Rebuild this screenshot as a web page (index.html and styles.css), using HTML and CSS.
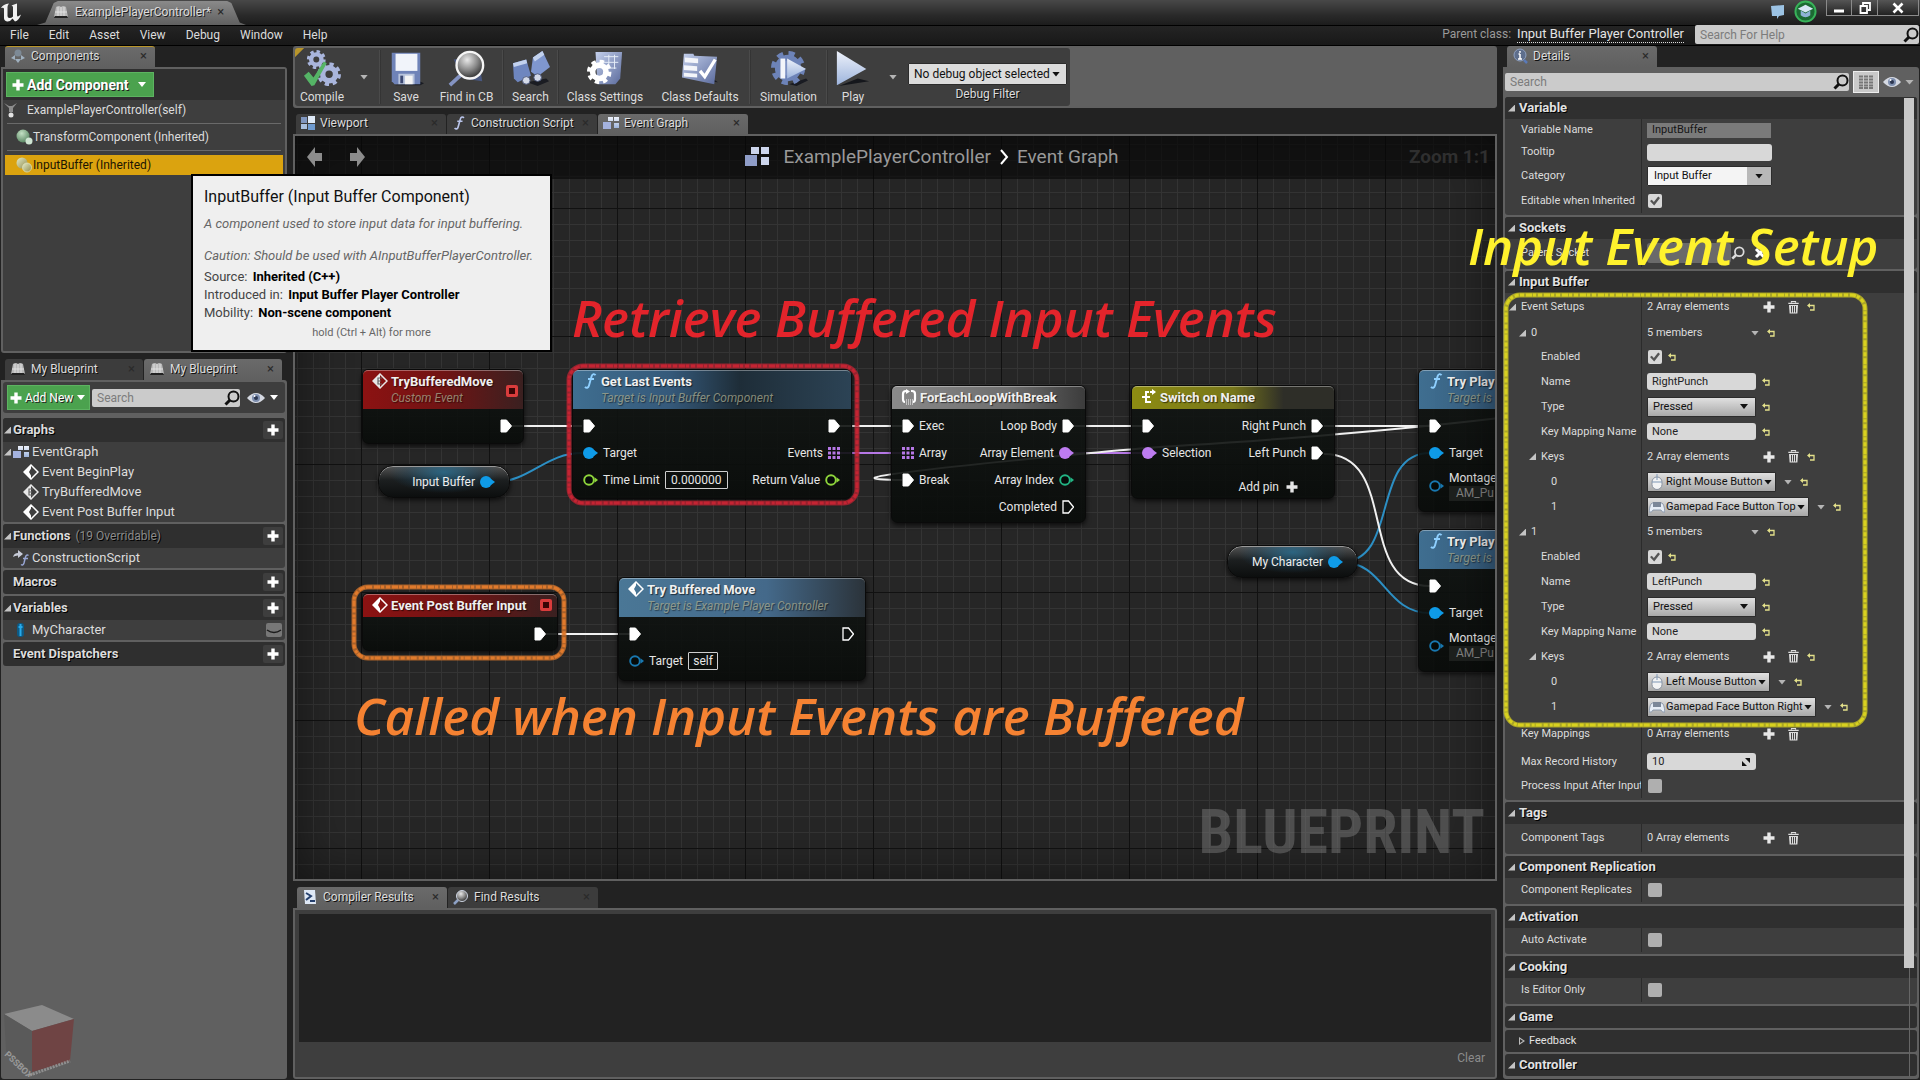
FILE: index.html
```html
<!DOCTYPE html>
<html lang="en">
<head>
<meta charset="utf-8">
<title>ExamplePlayerController</title>
<link rel="stylesheet" href="styles.css">
</head>
<body>
<svg class="defs" aria-hidden="true">
  <defs>
    <linearGradient id="steel" x1="0" y1="0" x2="1" y2="1"><stop offset="0" stop-color="#c4d0ec"/><stop offset="1" stop-color="#5a6a9c"/></linearGradient>
    <linearGradient id="ice" x1="0" y1="0" x2="0" y2="1"><stop offset="0" stop-color="#eef2fb"/><stop offset="1" stop-color="#9db4dc"/></linearGradient>
    <radialGradient id="ball" cx=".4" cy=".3" r=".7"><stop offset="0" stop-color="#e8e8e8"/><stop offset=".55" stop-color="#8a8a8a"/><stop offset="1" stop-color="#333"/></radialGradient>
    <radialGradient id="green" cx=".4" cy=".3" r=".7"><stop offset="0" stop-color="#c3e0c4"/><stop offset="1" stop-color="#5d8a66"/></radialGradient>
    <linearGradient id="tan" x1="0" y1="0" x2="1" y2="1"><stop offset="0" stop-color="#e4ecca"/><stop offset="1" stop-color="#8f8a4c"/></linearGradient>
  </defs>
  <symbol id="i-plus" viewBox="0 0 12 12"><path d="M4.300 0.500h3.400v3.800h3.800v3.400H7.700v3.800H4.300V7.700H.5V4.300h3.800z" fill="currentColor"/></symbol>
  <symbol id="i-search" viewBox="0 0 16 16"><circle cx="9.500" cy="6.500" r="5" fill="none" stroke="currentColor" stroke-width="2"/><path d="M6 10L1.500 14.500" stroke="currentColor" stroke-width="3"/></symbol>
  <symbol id="i-eye" viewBox="0 0 18 12"><path d="M0 6Q9-4 18 6Q9 16 0 6z" fill="#d5d9e2"/><circle cx="9" cy="6" r="4" fill="#7d8eae"/><circle cx="9" cy="6" r="2" fill="#2b3650"/><circle cx="7.500" cy="4" r="1" fill="#fff"/></symbol>
  <symbol id="i-trash" viewBox="0 0 11 13"><path d="M3.500 1.500V.5h4v1M.3 2.300h10.400" fill="none" stroke="#dcdcdc" stroke-width="1.200"/><path d="M1 4h9l-.6 8.500H1.600z" fill="#dcdcdc"/><path d="M3.500 5v6.500M5.500 5v6.500M7.500 5v6.500" stroke="#444"/></symbol>
  <symbol id="i-reset" viewBox="0 0 8 8"><path d="M1.500 2.500H7v4.500H3" fill="none" stroke="#e3e08a" stroke-width="1.300"/><path d="M0 2.500L3 0v5z" fill="#e3e08a"/></symbol>
  <symbol id="i-graph" viewBox="0 0 16 14"><path d="M5 1h5v4H5zM11 1h5v4h-5zM11 7h5v5h-5z" fill="url(#ice)"/><path d="M0 6h8v7H0z" fill="#a4b2de"/></symbol>
  <symbol id="i-view" viewBox="0 0 14 14"><path d="M0 1h6v6H0z" fill="#7f96bf"/><path d="M7 0h7v7H7z" fill="#dfeaf8"/><path d="M0 8h6v5H0z" fill="#a9c0df"/><path d="M7 8h7v6H7z" fill="#6f9bd0"/></symbol>
  <symbol id="i-f" viewBox="0 0 12 16"><path d="M11.500 2.300C10.500.5 8.300.8 7.600 3.300L5 12.500c-.7 2.500-2.500 3-4 1.300M4 6h6" fill="none" stroke="currentColor" stroke-width="1.900"/></symbol>
  <symbol id="i-event" viewBox="0 0 16 16"><path d="M8 1L15 8L8 15L1 8z" fill="none" stroke="#fff" stroke-width="1.500"/><path d="M8 1L1 8l7 7v-3.500L6 8l2-3.500z" fill="#fff"/></symbol>
  <symbol id="i-custom" viewBox="0 0 16 16"><path d="M8 1L15 8L8 15L1 8z" fill="none" stroke="#e8e8e8" stroke-width="1.500"/><path d="M8 1L1 8l7 7z" fill="#e8e8e8"/><path d="M10 5H6v6h4M6 8h3" fill="none" stroke="#666" stroke-width="1.200"/></symbol>
  <symbol id="i-book" viewBox="0 0 16 16"><path d="M1 13L3 3q3-2 5 0q2-2 5 0l2 10q-4-2-7 0q-3-2-7 0z" fill="#b9b9b9"/><path d="M8 3v10M5 3v9M11 3v9M2 8h12" stroke="#e9e9e9" stroke-width=".8"/><path d="M1 14h14l-1-2H2z" fill="#222"/></symbol>
  <symbol id="i-exec" viewBox="0 0 12 14"><path d="M1 1h5.500L11.500 7l-5 6H1z" fill="#fff" stroke="#fff"/></symbol>
  <symbol id="i-exec-o" viewBox="0 0 12 14"><path d="M1 1h5.500L11.500 7l-5 6H1z" fill="none" stroke="#fff" stroke-width="1.300"/></symbol>
  <symbol id="i-pin" viewBox="0 0 15 12"><circle cx="6" cy="6" r="6" fill="currentColor"/><path d="M11 3l4 3-4 3z" fill="currentColor"/></symbol>
  <symbol id="i-pin-o" viewBox="0 0 15 12"><circle cx="6" cy="6" r="4.800" fill="#060a08" stroke="currentColor" stroke-width="1.900"/><path d="M11.500 3.300l3.500 2.700-3.500 2.700z" fill="currentColor"/></symbol>
  <symbol id="i-array" viewBox="0 0 12 12"><path d="M0 0h3v3H0zM4.500 0h3v3h-3zM9 0h3v3H9zM0 4.500h3v3H0zM4.500 4.500h3v3h-3zM9 4.500h3v3H9zM0 9h3v3H0zM4.500 9h3v3h-3zM9 9h3v3H9z" fill="#b678e6"/></symbol>
  <symbol id="i-mouse" viewBox="0 0 12 16"><rect x="1" y="3" width="10" height="12.500" rx="5" fill="#f2f3f4" stroke="#8a93a0"/><path d="M6 0v6M1 8h10" stroke="#7f97b5"/></symbol>
  <symbol id="i-pad" viewBox="0 0 16 12"><path d="M3 2h10q2 1 3 9-3 1-4-2H4q-1 3-4 2Q1 3 3 2z" fill="#e6edf6" stroke="#7c8ba0" stroke-width=".8"/><path d="M4 1h8v5H4z" fill="#7b8798"/></symbol>
  <symbol id="i-gear" viewBox="0 0 24 24"><circle cx="12" cy="12" r="10" fill="none" stroke="currentColor" stroke-width="4" stroke-dasharray="4.200 3.654"/><circle cx="12" cy="12" r="6.500" fill="none" stroke="currentColor" stroke-width="5.500"/></symbol>
</svg>

<header class="titlebar">
  <svg class="ue" viewBox="0 0 24 22"><path d="M1 7Q3 3 9 2.500 7.500 4 7.500 6v9q0 2 2 2t3.500-1.500V6q0-1-1.500-1.500Q14 3.500 17 2.500V14q0 1.500 1 1.500l3-2q-2 6-6 7l-2.500-3Q10 21 7 20.500 4 19.500 4 17V8Q4 6 1 7z" fill="#f2f2f2"/></svg>
  <div class="doc-tab"><svg class="ic16"><use href="#i-book"/></svg><span>ExamplePlayerController*</span><i class="x">×</i></div>
  <div class="win">
    <svg class="ic16" viewBox="0 0 16 16"><path d="M1 2l13-1v10l-5 1-2 3v-3H2z" fill="#9cc3e4"/></svg>
    <svg class="hat" viewBox="0 0 24 24"><circle cx="12" cy="12" r="10.500" fill="#1c6a33" stroke="#38b35a" stroke-width="2"/><path d="M4 9l8-4 8 4-8 4z" fill="#d6e6f5"/><path d="M7 11v5q5 4 10 0v-5l-5 3z" fill="#8fb2d6"/></svg>
    <div class="win-btns">
      <button aria-label="Minimize"><svg viewBox="0 0 12 12"><path d="M1 9h10" stroke="#fff" stroke-width="3"/></svg></button>
      <button aria-label="Restore"><svg viewBox="0 0 12 12"><path d="M4 3V1h7v7H9M1.500 4h6.500v7H1.500z" fill="none" stroke="#fff" stroke-width="1.800"/></svg></button>
      <button class="wide" aria-label="Close"><svg viewBox="0 0 12 12"><path d="M1.500 1.500l9 9M10.500 1.500l-9 9" stroke="#fff" stroke-width="2.600"/></svg></button>
    </div>
  </div>
</header>
<nav class="menubar">
  <a href="#">File</a><a href="#">Edit</a><a href="#">Asset</a><a href="#">View</a><a href="#">Debug</a><a href="#">Window</a><a href="#">Help</a>
  <div class="parent"><span>Parent class:</span><a href="#" class="dotted">Input Buffer Player Controller</a></div>
  <div class="search help"><input type="text" placeholder="Search For Help" aria-label="Search For Help"><svg class="ic16"><use href="#i-search"/></svg></div>
</nav>

<main class="shell">
  <aside class="left">
    <div class="tabs"><div class="tab on hot w150"><svg class="ic16" viewBox="0 0 16 16"><circle cx="8" cy="5" r="3.500" fill="#7d8a96"/><path d="M1 10l4-3v5zM15 10l-4-3v5zM5 11h6l-3 4z" fill="#9fb0bf"/></svg><span>Components</span><i class="x">×</i></div></div>
    <section class="panel components">
      <div class="strip"><button class="green big"><svg class="ic12"><use href="#i-plus"/></svg>Add Component<i class="tri"></i></button></div>
      <div class="comp self"><svg class="ic16" viewBox="0 0 16 16"><path d="M1 1l5 3h3l5-3-4 5v4H6V6z" fill="#8c8c8c"/><circle cx="8" cy="13" r="2.500" fill="#e3e3e3"/></svg>ExamplePlayerController(self)</div>
      <hr>
      <div class="comp"><svg class="ic18" viewBox="0 0 18 16"><circle cx="8" cy="7" r="6.500" fill="url(#green)"/><circle cx="14" cy="12" r="3.500" fill="#cfe5d2"/></svg>TransformComponent (Inherited)</div>
      <hr>
      <div class="comp sel"><svg class="ic18" viewBox="0 0 18 16"><circle cx="7" cy="6" r="5.500" fill="url(#tan)"/><circle cx="12" cy="10.500" r="4.500" fill="url(#tan)" stroke="#e0e0b4" stroke-width=".8"/></svg>InputBuffer (Inherited)</div>
    </section>

    <div class="tabs low"><div class="tab w138"><svg class="ic16"><use href="#i-book"/></svg><span>My Blueprint</span><i class="x">×</i></div><div class="tab on w138"><svg class="ic16"><use href="#i-book"/></svg><span>My Blueprint</span><i class="x">×</i></div></div>
    <section class="panel blueprint">
      <div class="bp-tools"><button class="green"><svg class="ic12"><use href="#i-plus"/></svg>Add New<i class="tri"></i></button>
        <div class="search grow"><input type="text" placeholder="Search" aria-label="Search blueprint"><svg class="ic16"><use href="#i-search"/></svg></div>
        <svg class="eye"><use href="#i-eye"/></svg><i class="tri"></i></div>
      <div class="group first"><h2><i class="open"></i>Graphs<button aria-label="Add graph"><svg class="ic12"><use href="#i-plus"/></svg></button></h2>
        <div class="item"><i class="open"></i><svg class="ic16"><use href="#i-graph"/></svg>EventGraph</div>
        <div class="item sub"><svg class="ic16"><use href="#i-event"/></svg>Event BeginPlay</div>
        <div class="item sub"><svg class="ic16"><use href="#i-custom"/></svg>TryBufferedMove</div>
        <div class="item sub"><svg class="ic16"><use href="#i-event"/></svg>Event Post Buffer Input</div></div>
      <div class="group"><h2><i class="open"></i>Functions<small>(19 Overridable)</small><button aria-label="Add function"><svg class="ic12"><use href="#i-plus"/></svg></button></h2>
        <div class="item flat"><svg class="ic16" viewBox="0 0 16 16"><path d="M0 7q1-4 5-4V0l5 4-5 4V5.500Q2 5.500 0 7z" fill="#c7cbd8"/><path d="M15.500 5.500q-2-1.500-3 1.500l-1.500 6q-1 3-3 1.500M10 8.500h5" fill="none" stroke="#98a6d4" stroke-width="1.500"/></svg>ConstructionScript</div></div>
      <div class="group"><h2 class="noarrow">Macros<button aria-label="Add macro"><svg class="ic12"><use href="#i-plus"/></svg></button></h2></div>
      <div class="group"><h2><i class="open"></i>Variables<button aria-label="Add variable"><svg class="ic12"><use href="#i-plus"/></svg></button></h2>
        <div class="item flat"><svg class="ic16" viewBox="0 0 16 16"><rect x="4" y="1" width="7" height="14" rx="3" fill="#0e5a84"/><path d="M7.500 2v12M5.500 5h4" stroke="#27a9ea" stroke-width="2"/></svg>MyCharacter<button class="lash" aria-label="Toggle visibility"><svg viewBox="0 0 16 14"><path d="M1 7q7 5 14 0" fill="none" stroke="#1c1c1c" stroke-width="1.500"/></svg></button></div></div>
      <div class="group"><h2 class="noarrow">Event Dispatchers<button aria-label="Add dispatcher"><svg class="ic12"><use href="#i-plus"/></svg></button></h2></div>
      <svg class="cube" viewBox="0 0 76 72"><path d="M1 9L39 0l32 14-42 12z" fill="#8b8b8b"/><path d="M1 9l28 17v41L3 46z" fill="#5a5a5a"/><path d="M29 26l42-12-4 42-38 11z" fill="#6f4444"/><path d="M27 70l40-14" stroke="#8f8f8f" stroke-width="3" stroke-dasharray="2 1"/><text x="1" y="50" transform="rotate(44 1 50)" class="cube-t">PSSBOX</text></svg>
    </section>
  </aside>

  <section class="center">
    <div class="toolbar">
      <div class="tools">
        <button class="tool c54"><svg viewBox="0 0 40 40"><g color="#a9b5dc"><use href="#i-gear" x="4" y="0" width="20" height="20"/><use href="#i-gear" x="15" y="13" width="25" height="25"/></g><path d="M1 27l5-4 5 6L22 12l3 2-13 23-3 1z" fill="#55b466"/></svg>Compile</button>
        <button class="drop" aria-label="Compile options"><i class="tri dim"></i></button><i class="sep"></i>
        <button class="tool c50"><svg viewBox="0 0 40 40"><path d="M34 33l5 2-4 2H8z" fill="#191b22"/><path d="M5 3h30v33H8l-3-3z" fill="#6f83b8"/><path d="M9 4h23v18H9z" fill="#f1f4fa"/><path d="M12 25h17v11H12z" fill="#b8c4dc"/><path d="M19 27h8v9h-8z" fill="#f4f4f4"/><path d="M14 27h3v8h-3z" fill="#3b4872"/></svg>Save</button>
        <button class="tool c70"><svg viewBox="0 0 40 40"><path d="M6 10l26-3 4 26-20-3z" fill="#495880"/><path d="M2 37l12-11" stroke="#8493c2" stroke-width="4"/><circle cx="23" cy="16" r="14" fill="url(#ball)" stroke="#f5f5f5" stroke-width="2.500"/></svg>Find in CB</button><i class="sep"></i>
        <button class="tool c53"><svg viewBox="0 0 40 40"><path d="M16 34l20-4 3 3-12 5z" fill="#1a1c22"/><path d="M1 14l14-4 5 17-14 7-4-4z" fill="#6e86bf"/><path d="M22 8l10-7 8 17-13 10-7-5z" fill="#7f97cf"/><path d="M1 14l14-4 1 4-14 4zM22 8l10-7 2 4-10 7z" fill="#c3d2ee"/><circle cx="15" cy="32" r="4" fill="#d4dae8" stroke="#4c587c"/><circle cx="27" cy="29" r="4" fill="#d4dae8" stroke="#4c587c"/></svg>Search</button><i class="sep"></i>
        <button class="tool c92"><svg viewBox="0 0 40 40"><path d="M10 2h28l-2 28-5 6H12z" fill="url(#steel)"/><path d="M19 7h15M19 13h15M19 19h13M24 5v15M30 5v15" stroke="#e6edf8"/><g color="#fff"><use href="#i-gear" x="1" y="10" width="26" height="26"/></g></svg>Class Settings</button>
        <button class="tool c98"><svg viewBox="0 0 40 40"><path d="M33 30l6 4-20-2z" fill="#191b22"/><path d="M3 4h10l1 2 24 1-3 29L1 29z" fill="url(#steel)"/><path d="M4 8l14 1v5L4 13zM3 16l14 1v5L3 21zM3 24l14 1v4L3 28z" fill="#f3f5fa"/><path d="M20 22l5 6 11-18" fill="none" stroke="#fff" stroke-width="3.500"/></svg>Class Defaults</button><i class="sep"></i>
        <button class="tool c74"><svg viewBox="0 0 40 40"><path d="M20 36l18-6 2 2-12 6z" fill="#191b22"/><g color="#6d83b8"><use href="#i-gear" x="1" y="1" width="36" height="36"/></g><circle cx="19" cy="19" r="8" fill="#7f93c4"/><path d="M11 9h5v21h-5z" fill="#f3f5fa"/><path d="M18 9l20 11-20 10z" fill="url(#ice)"/></svg>Simulation</button><i class="sep"></i>
        <button class="tool c50"><svg viewBox="0 0 40 40"><path d="M5 38l32-5-12-3z" fill="#15171c"/><path d="M3 1l31 19L3 37z" fill="url(#ice)"/></svg>Play</button>
        <button class="drop" aria-label="Play options"><i class="tri dim"></i></button>
        <div class="debug"><div class="dd light"><select id="dbg" aria-label="Debug Filter"><option>No debug object selected</option></select><i class="tri dark"></i></div><label for="dbg">Debug Filter</label></div>
      </div>
    </div>
    <div class="tabs mid"><div class="tab w150"><svg class="ic14"><use href="#i-view"/></svg><span>Viewport</span><i class="x">×</i></div><div class="tab w150"><svg class="ic14 blue"><use href="#i-f"/></svg><span>Construction Script</span><i class="x">×</i></div><div class="tab on w150"><svg class="ic16"><use href="#i-graph"/></svg><span>Event Graph</span><i class="x">×</i></div></div>

    <div class="graph">
      <svg class="wires"><g transform="translate(-295,-136)" fill="none">
        <path class="w" d="M512 426H582M840 426H902M1074 426H1142M1324 426H1430M546 634H630"/>
        <path class="p" d="M840 453H902M1073 453H1142"/>
        <path class="w" d="M902 480C885 480 868 479 877 477C890 472 1120 449 1190 445S1400 430 1500 418"/>
        <path class="b" d="M494 482C530 482 545 453 582 453M1341 562C1400 562 1370 453 1430 453M1341 562C1385 562 1385 613 1430 613"/>
        <path class="w" d="M1324 454C1400 454 1355 586 1430 586"/>
      </g></svg>

      <article class="node n1"><header class="red"><svg class="ic16"><use href="#i-custom"/></svg><div><b>TryBufferedMove</b><em>Custom Event</em></div><i class="dlg"></i></header>
        <div class="body"><div class="pr"><span></span><svg class="ex"><use href="#i-exec"/></svg></div></div></article>
      <article class="var v1"><span>Input Buffer</span><svg class="pin cy"><use href="#i-pin"/></svg></article>
      <article class="node n2"><header class="blu"><svg class="ic16 lblue"><use href="#i-f"/></svg><div><b>Get Last Events</b><em>Target is Input Buffer Component</em></div></header>
        <div class="body"><div class="pr"><svg class="ex"><use href="#i-exec"/></svg><span></span><svg class="ex"><use href="#i-exec"/></svg></div>
          <div class="pr"><svg class="pin cy"><use href="#i-pin"/></svg>Target<span></span>Events<svg class="arr"><use href="#i-array"/></svg></div>
          <div class="pr"><svg class="pin gr"><use href="#i-pin-o"/></svg><label for="tl">Time Limit</label><input id="tl" class="nin w63" value="0.000000"><span></span>Return Value<svg class="pin gr"><use href="#i-pin-o"/></svg></div></div></article>
      <article class="node n3"><header class="red one"><svg class="ic16"><use href="#i-event"/></svg><div><b>Event Post Buffer Input</b></div><i class="dlg"></i></header>
        <div class="body"><div class="pr"><span></span><svg class="ex"><use href="#i-exec"/></svg></div></div></article>
      <article class="node n4"><header class="blu"><svg class="ic16"><use href="#i-event"/></svg><div><b>Try Buffered Move</b><em>Target is Example Player Controller</em></div></header>
        <div class="body"><div class="pr"><svg class="ex"><use href="#i-exec"/></svg><span></span><svg class="ex"><use href="#i-exec-o"/></svg></div>
          <div class="pr"><svg class="pin cd"><use href="#i-pin-o"/></svg><label for="sf">Target</label><input id="sf" class="nin w30" value="self"></div></div></article>
      <article class="node n5"><header class="gry one"><svg class="ic16" viewBox="0 0 16 16"><path d="M6 2H5Q2 2 2 5v5q0 3 2 3M10 2h1q3 0 3 3v5q0 3-2 3" fill="none" stroke="#fff" stroke-width="2.200"/><path d="M5 0l4 2.500L5 5z" fill="#fff"/><path d="M5 11h7M5 13h7M5 15h7" stroke="#fff" stroke-dasharray="1 1"/></svg><div><b>ForEachLoopWithBreak</b></div></header>
        <div class="body"><div class="pr"><svg class="ex"><use href="#i-exec"/></svg>Exec<span></span>Loop Body<svg class="ex"><use href="#i-exec"/></svg></div>
          <div class="pr"><svg class="arr"><use href="#i-array"/></svg>Array<span></span>Array Element<svg class="pin pu"><use href="#i-pin"/></svg></div>
          <div class="pr"><svg class="ex"><use href="#i-exec"/></svg>Break<span></span>Array Index<svg class="pin te"><use href="#i-pin-o"/></svg></div>
          <div class="pr"><span></span>Completed<svg class="ex"><use href="#i-exec-o"/></svg></div></div></article>
      <article class="node n6"><header class="yel one"><svg class="ic16" viewBox="0 0 16 16"><path d="M8 3H5v10h5M1 8h8M9 3h5" fill="none" stroke="#fff" stroke-width="2" /><path d="M11 0l4 3-4 3z" fill="#fff"/></svg><div><b>Switch on Name</b></div></header>
        <div class="body"><div class="pr"><svg class="ex"><use href="#i-exec"/></svg><span></span>Right Punch<svg class="ex"><use href="#i-exec"/></svg></div>
          <div class="pr"><svg class="pin pu"><use href="#i-pin"/></svg>Selection<span></span>Left Punch<svg class="ex"><use href="#i-exec"/></svg></div>
          <div class="pr add"><span></span><button>Add pin<svg class="ic12"><use href="#i-plus"/></svg></button></div></div></article>
      <article class="node n7"><header class="blu"><svg class="ic16 lblue"><use href="#i-f"/></svg><div><b>Try Play</b><em>Target is</em></div></header>
        <div class="body"><div class="pr"><svg class="ex"><use href="#i-exec"/></svg></div><div class="pr"><svg class="pin cy"><use href="#i-pin"/></svg>Target</div>
          <div class="pr two"><svg class="pin cd"><use href="#i-pin-o"/></svg><div>Montage<small>AM_Pu</small></div></div></div></article>
      <article class="node n8"><header class="blu"><svg class="ic16 lblue"><use href="#i-f"/></svg><div><b>Try Play</b><em>Target is</em></div></header>
        <div class="body"><div class="pr"><svg class="ex"><use href="#i-exec"/></svg></div><div class="pr"><svg class="pin cy"><use href="#i-pin"/></svg>Target</div>
          <div class="pr two"><svg class="pin cd"><use href="#i-pin-o"/></svg><div>Montage<small>AM_Pu</small></div></div></div></article>
      <article class="var v2"><span>My Character</span><svg class="pin cy"><use href="#i-pin"/></svg></article>

      <div class="shade"></div>
      <div class="crumbs">
        <div class="nav"><button aria-label="Back"><svg viewBox="0 0 18 22"><path d="M16 7v8H9v6L1 11 9 1v6z" fill="#8c8c8c"/></svg></button><button aria-label="Forward"><svg viewBox="0 0 18 22"><path d="M2 7v8h7v6l8-10L9 1v6z" fill="#8c8c8c"/></svg></button></div>
        <div class="path"><svg viewBox="0 0 24 20"><path d="M6 0h8v7H6zM16 0h8v7h-8zM16 10h8v8h-8z" fill="#ccd5ec"/><path d="M0 8h12v11H0z" fill="#8f9dc8"/></svg><a href="#">ExamplePlayerController</a><svg class="chev" viewBox="0 0 10 16"><path d="M2 1l6 7-6 7" fill="none" stroke="#fff" stroke-width="2"/></svg><span>Event Graph</span></div>
        <strong>Zoom 1:1</strong>
      </div>
      <div class="mark">BLUEPRINT</div>
    </div>

    <div class="tabs low"><div class="tab on w150"><svg class="ic16" viewBox="0 0 16 16"><path d="M2 1h11l1 14H3z" fill="#dfe8f5"/><path d="M4 4l5 3-5 4M8 12h5" fill="none" stroke="#25406e" stroke-width="2"/></svg><span>Compiler Results</span><i class="x">×</i></div><div class="tab w150"><svg class="ic16" viewBox="0 0 16 16"><path d="M1 15l4-4" stroke="#8ea2c6" stroke-width="2.500"/><circle cx="9" cy="7" r="5.500" fill="url(#ball)" stroke="#cfd6e4"/></svg><span>Find Results</span><i class="x">×</i></div></div>
    <section class="results"><div class="log"></div><button>Clear</button></section>
  </section>

  <aside class="right">
    <div class="tabs"><div class="tab on w150"><svg class="ic16" viewBox="0 0 16 16"><circle cx="8" cy="7" r="6" fill="#5e6e8c" stroke="#8ea0c0"/><path d="M12 12l3 3" stroke="#5a7ab8" stroke-width="2.500"/><path d="M8 6v5M8 3v1.800M6.500 6H8M6 11h4" stroke="#fff" stroke-width="1.500"/></svg><span>Details</span><i class="x">×</i></div></div>
    <section class="details">
      <div class="d-tools"><div class="search grow"><input type="text" placeholder="Search" aria-label="Search details"><svg class="ic16"><use href="#i-search"/></svg></div>
        <button class="matrix" aria-label="Property matrix"><svg viewBox="0 0 16 14"><path d="M1 1.500h14M1 4.500h14M1 7.500h14M1 10.500h14M1 13h14" stroke="#777" stroke-width="2" stroke-dasharray="4 1"/></svg></button><svg class="eye"><use href="#i-eye"/></svg><i class="tri dim"></i></div>
      <div class="d-list">
        <div class="cat"><h2><i class="open"></i>Variable</h2>
          <div class="row r22"><label for="a1">Variable Name</label><div><input id="a1" class="fld ro" value="InputBuffer" readonly></div></div>
          <div class="row r22"><label for="a2">Tooltip</label><div><input id="a2" class="fld w125" value=""></div></div>
          <div class="row r26"><label for="a3">Category</label><div><div class="dd combo"><select id="a3"><option>Input Buffer</option></select><b><i class="tri dark"></i></b></div></div></div>
          <div class="row r24"><label for="a4">Editable when Inherited</label><div><input id="a4" type="checkbox" checked></div></div></div>
        <div class="cat"><h2><i class="open"></i>Sockets</h2>
          <div class="row r28"><label for="b1">Parent Socket</label><div><input id="b1" class="fld sock" readonly><svg class="ic14 mag"><use href="#i-search"/></svg><svg class="ic12 clr" viewBox="0 0 12 12"><path d="M2 2l8 8M10 2l-8 8" stroke="#fff" stroke-width="3"/></svg></div></div></div>
        <div class="cat"><h2><i class="open"></i>Input Buffer</h2>
          <div class="row r28"><span class="name l0"><i class="open"></i>Event Setups</span><div><span class="cnt">2 Array elements</span><svg class="ic12 pl"><use href="#i-plus"/></svg><svg class="bin"><use href="#i-trash"/></svg><svg class="rs"><use href="#i-reset"/></svg></div></div>
          <div class="row r24"><span class="name l1"><i class="open"></i>0</span><div><span class="mem">5 members</span><i class="tri dim"></i><svg class="rs"><use href="#i-reset"/></svg></div></div>
          <div class="row r24"><label class="l2" for="c1">Enabled</label><div><input id="c1" type="checkbox" checked><svg class="rs"><use href="#i-reset"/></svg></div></div>
          <div class="row"><label class="l2" for="c2">Name</label><div><input id="c2" class="fld w109" value="RightPunch"><svg class="rs"><use href="#i-reset"/></svg></div></div>
          <div class="row"><label class="l2" for="c3">Type</label><div><div class="dd w108"><select id="c3"><option>Pressed</option></select><i class="tri dark"></i></div><svg class="rs"><use href="#i-reset"/></svg></div></div>
          <div class="row"><label class="l2" for="c4">Key Mapping Name</label><div><input id="c4" class="fld w109" value="None"><svg class="rs"><use href="#i-reset"/></svg></div></div>
          <div class="row"><span class="name l2"><i class="open"></i>Keys</span><div><span class="cnt">2 Array elements</span><svg class="ic12 pl"><use href="#i-plus"/></svg><svg class="bin"><use href="#i-trash"/></svg><svg class="rs"><use href="#i-reset"/></svg></div></div>
          <div class="row r26"><label class="l3" for="c5">0</label><div><div class="dd key"><svg class="ic16"><use href="#i-mouse"/></svg><select id="c5"><option>Right Mouse Button</option></select><i class="tri dark"></i></div><i class="tri dim"></i><svg class="rs"><use href="#i-reset"/></svg></div></div>
          <div class="row r24"><label class="l3" for="c6">1</label><div><div class="dd key"><svg class="ic16"><use href="#i-pad"/></svg><select id="c6"><option>Gamepad Face Button Top</option></select><i class="tri dark"></i></div><i class="tri dim"></i><svg class="rs"><use href="#i-reset"/></svg></div></div>
          <div class="row r26"><span class="name l1"><i class="open"></i>1</span><div><span class="mem">5 members</span><i class="tri dim"></i><svg class="rs"><use href="#i-reset"/></svg></div></div>
          <div class="row r24"><label class="l2" for="e1">Enabled</label><div><input id="e1" type="checkbox" checked><svg class="rs"><use href="#i-reset"/></svg></div></div>
          <div class="row"><label class="l2" for="e2">Name</label><div><input id="e2" class="fld w109" value="LeftPunch"><svg class="rs"><use href="#i-reset"/></svg></div></div>
          <div class="row"><label class="l2" for="e3">Type</label><div><div class="dd w108"><select id="e3"><option>Pressed</option></select><i class="tri dark"></i></div><svg class="rs"><use href="#i-reset"/></svg></div></div>
          <div class="row"><label class="l2" for="e4">Key Mapping Name</label><div><input id="e4" class="fld w109" value="None"><svg class="rs"><use href="#i-reset"/></svg></div></div>
          <div class="row"><span class="name l2"><i class="open"></i>Keys</span><div><span class="cnt">2 Array elements</span><svg class="ic12 pl"><use href="#i-plus"/></svg><svg class="bin"><use href="#i-trash"/></svg><svg class="rs"><use href="#i-reset"/></svg></div></div>
          <div class="row r26"><label class="l3" for="e5">0</label><div><div class="dd key"><svg class="ic16"><use href="#i-mouse"/></svg><select id="e5"><option>Left Mouse Button</option></select><i class="tri dark"></i></div><i class="tri dim"></i><svg class="rs"><use href="#i-reset"/></svg></div></div>
          <div class="row r24"><label class="l3" for="e6">1</label><div><div class="dd key"><svg class="ic16"><use href="#i-pad"/></svg><select id="e6"><option>Gamepad Face Button Right</option></select><i class="tri dark"></i></div><i class="tri dim"></i><svg class="rs"><use href="#i-reset"/></svg></div></div>
          <div class="row r30"><span class="name">Key Mappings</span><div><span class="cnt">0 Array elements</span><svg class="ic12 pl"><use href="#i-plus"/></svg><svg class="bin"><use href="#i-trash"/></svg></div></div>
          <div class="row"><label for="g1">Max Record History</label><div><div class="spin"><input id="g1" class="fld w109" value="10"><svg viewBox="0 0 10 10"><path d="M4 1h5v5zM1 4v5h5z" fill="#111"/></svg></div></div></div>
          <div class="row r24"><label for="g2">Process Input After Input</label><div><input id="g2" type="checkbox"></div></div></div>
        <div class="cat"><h2><i class="open"></i>Tags</h2>
          <div class="row r28"><span class="name">Component Tags</span><div><span class="cnt">0 Array elements</span><svg class="ic12 pl"><use href="#i-plus"/></svg><svg class="bin"><use href="#i-trash"/></svg></div></div></div>
        <div class="cat"><h2><i class="open"></i>Component Replication</h2><div class="row r24"><label for="h1">Component Replicates</label><div><input id="h1" type="checkbox"></div></div></div>
        <div class="cat"><h2><i class="open"></i>Activation</h2><div class="row r24"><label for="h2">Auto Activate</label><div><input id="h2" type="checkbox"></div></div></div>
        <div class="cat"><h2><i class="open"></i>Cooking</h2><div class="row r24"><label for="h3">Is Editor Only</label><div><input id="h3" type="checkbox"></div></div></div>
        <div class="cat bare"><h2><i class="open"></i>Game</h2></div>
        <div class="cat bare"><h3><i class="shut"></i>Feedback</h3></div>
        <div class="cat bare"><h2><i class="open"></i>Controller</h2></div>
        <div class="scroll"></div>
      </div>
    </section>
  </aside>
</main>

<div class="tip" role="tooltip">
  <h4>InputBuffer (Input Buffer Component)</h4>
  <p class="it">A component used to store input data for input buffering.</p>
  <p class="it">Caution: Should be used with AInputBufferPlayerController.</p>
  <p>Source: <b>Inherited (C++)</b></p><p>Introduced in: <b>Input Buffer Player Controller</b></p><p>Mobility: <b>Non-scene component</b></p>
  <p class="hold">hold (Ctrl + Alt) for more</p>
</div>
<svg class="ring ring-red"><rect class="base"/><rect class="grain"/></svg>
<svg class="ring ring-orange"><rect class="base"/><rect class="grain"/></svg>
<svg class="ring ring-yellow"><rect class="base"/><rect class="grain"/></svg>
<div class="note note-red">Retrieve Buffered Input Events</div>
<div class="note note-orange">Called when Input Events are Buffered</div>
<div class="note note-yellow">Input Event Setup</div>
</body>
</html>
```
FILE: styles.css
```css
* { box-sizing: border-box; }
body { margin: 0; height: 100vh; display: flex; flex-direction: column; overflow: hidden; position: relative; background: #222; color: #dcdcdc; font: 12px/16px Roboto, "Liberation Sans", sans-serif; }
button, input, select { font: inherit; color: inherit; border: 0; padding: 0; margin: 0; background: none; outline: 0; }
select, input[type="checkbox"] { appearance: none; }
a { color: inherit; text-decoration: none; }
svg { display: block; flex: none; }
h2, h3, h4, p { margin: 0; }
.defs { position: absolute; width: 0; height: 0; }
.ic12 { width: 12px; height: 12px; }
.ic14 { width: 14px; height: 14px; }
.ic16 { width: 16px; height: 16px; }
.ic18 { width: 18px; height: 16px; }
.blue { color: #b9c4ea; }
.lblue { color: #8fd0ff; }

/* title and menu */
.titlebar { height: 25px; flex: none; display: flex; align-items: flex-start; background: linear-gradient(#484848, #2a2a2a 60%, #1c1c1c); }
.ue { width: 24px; height: 22px; margin-top: 1px; }
.doc-tab { margin: 1px auto 0 13px; width: 209px; height: 24px; padding: 0 16px 2px; display: flex; align-items: center; gap: 6px; background: linear-gradient(#8a8a8a, #606060); clip-path: polygon(0 100%, 4% 90%, 8% 8%, 10% 0, 91% 0, 93% 8%, 97% 90%, 100% 100%); text-shadow: 1px 1px #222; }
.x { font-style: normal; font-size: 13px; color: #2a2a2a; text-shadow: none; }
.win { display: flex; gap: 6px; }
.win > .ic16 { margin: 4px 2px 0 0; }
.hat { width: 23px; height: 23px; }
.win-btns { display: flex; margin-left: 3px; margin-right: 1px; }
.win-btns button { width: 26px; height: 16px; display: grid; place-items: center; background: linear-gradient(#555, #222); border: 1px solid #8a8a8a; border-top: 0; border-left-width: 0; }
.win-btns button:first-child { border-left-width: 1px; }
.win-btns .wide { width: 41px; }
.win-btns svg { width: 12px; height: 12px; }
.menubar { height: 21px; flex: none; display: flex; align-items: center; gap: 20px; padding: 0 0 2px 10px; border-top: 1px solid #000; border-bottom: 1px solid #000; background: linear-gradient(#242424, #181818); }
.parent { margin-left: auto; display: flex; gap: 6px; color: #9a9a9a; }
.dotted { color: #e4e4e4; font-size: 13px; border-bottom: 1px dotted #ddd; }
.search { display: flex; align-items: center; height: 18px; background: #cbcbcb; border-radius: 2px; padding-left: 5px; color: #111; }
.search input { flex: 1; min-width: 0; width: 0; }
.search input::placeholder { color: #7c7c7c; opacity: 1; }
.menubar .help { width: 224px; height: 19px; margin: 0 1px 0 -9px; }
.grow { flex: 1; }

/* shell */
.shell { flex: 1; min-height: 0; display: grid; grid-template-columns: 286px minmax(0, 1fr) 416px; gap: 6px; padding: 0 1px 1px; }
.left, .center, .right { display: flex; flex-direction: column; min-height: 0; }
.tabs { display: flex; gap: 1px; height: 21px; flex: none; padding-left: 4px; }
.tabs.low { margin-top: 6px; }
.tabs.mid { height: 20px; margin-top: 6px; padding-left: 3px; }
.tab { display: flex; align-items: center; gap: 5px; padding: 0 8px 2px 5px; background: #3c3c3c; border-radius: 3px 3px 0 0; text-shadow: 1px 1px #111; white-space: nowrap; }
.tab.on { background: linear-gradient(#6a6a6a, #606060); }
.tab.hot { border-top: 1px solid #b8952a; }
.tab .x { margin-left: auto; }
.w150 { width: 150px; }
.w138 { width: 138px; }
.panel { border: 2px solid #606060; border-radius: 0 3px 3px 3px; background: #3e3e3e; }
.tri { width: 8px; height: 5px; flex: none; background: #fff; clip-path: polygon(0 0, 100% 0, 50% 100%); }
.tri.dim { background: #b5b5b5; }
.tri.dark { background: #111; }
.open { width: 7px; height: 7px; flex: none; background: #c4c4c4; clip-path: polygon(100% 0, 100% 100%, 0 100%); }
.shut { width: 6px; height: 8px; flex: none; background: #bbb; clip-path: polygon(0 0, 100% 50%, 0 100%, 0 0, 1px 2px, 1px 6px, 4px 4px, 1px 2px); }

/* components */
.components { height: 286px; flex: none; }
.strip { background: #2f2f2f; padding: 3px; height: 31px; }
.green { display: flex; align-items: center; gap: 3px; height: 25px; background: #4ba24e; color: #fff; text-shadow: 1px 1px #222; padding: 0 5px 0 3px; box-shadow: inset 0 0 0 1px #5db361; white-space: nowrap; }
.green.big { width: 148px; padding-left: 6px; padding-right: 8px; font-size: 14px; font-weight: bold; }
.green .tri { margin-left: auto; }
.components hr { border: 0; height: 1px; margin: 3px 4px; background: #6a6a6a; }
.comp { height: 20px; display: flex; align-items: center; padding-left: 12px; }
.comp.self { padding-left: 0; gap: 8px; margin-bottom: 3px; }
.comp.sel { background: #dba30f; color: #1c1503; margin: 4px 2px; padding-left: 10px; padding-bottom: 1px; }

/* my blueprint */
.blueprint { flex: 1; min-height: 0; background: #606060; display: flex; flex-direction: column; gap: 2px; overflow: hidden; font-size: 13px; }
.bp-tools { display: flex; align-items: center; gap: 2px; height: 31px; padding: 0 7px 0 4px; background: #3e3e3e; border-radius: 3px; font-size: 12px; margin-bottom: 3px; }
.bp-tools .green { width: 83px; gap: 3px; }
.bp-tools .eye { margin: 0 3px 0 5px; }
.eye { width: 18px; height: 12px; }
.group { background: #3e3e3e; border-radius: 3px; overflow: hidden; }
.group h2 { height: 24px; display: flex; align-items: center; gap: 2px; padding: 0 2px 0 1px; background: #2f2f2f; font-size: 13px; text-shadow: 1px 1px #000; }
.group h2.noarrow { padding-left: 10px; }
.group h2 small { font-size: 12px; font-weight: normal; color: #8a8a8a; margin-left: 3px; }
.group h2 button { margin-left: auto; width: 20px; height: 18px; display: grid; place-items: center; background: #3e3e3e; border-radius: 2px; color: #fff; }
.item { height: 20px; display: flex; align-items: center; gap: 3px; padding-left: 1px; }
.item .open + svg { margin-left: -1px; }
.item.sub { padding-left: 20px; }
.item.flat { padding-left: 10px; padding-right: 3px; }
.lash { margin-left: auto; width: 16px; height: 14px; background: #777; border-radius: 2px; }
.cube { width: 76px; height: 72px; margin-top: auto; overflow: visible; }
.cube-t { font: bold 9px Roboto, sans-serif; fill: #999; }

/* toolbar */
.toolbar { height: 62px; flex: none; padding: 2px; background: #606060; border-radius: 3px; display: flex; }
.tools { display: flex; align-items: stretch; background: linear-gradient(135deg, #b8952a 6px, #3e3e3e 7px); border-radius: 3px; text-shadow: 1px 1px #111; padding-right: 3px; }
.tool { display: flex; flex-direction: column; align-items: center; gap: 1px; white-space: nowrap; }
.tool svg { width: 38px; height: 38px; margin-top: 2px; }
.c50 { width: 50px; } .c53 { width: 53px; } .c54 { width: 54px; } .c70 { width: 71px; } .c74 { width: 75px; } .c92 { width: 92px; } .c98 { width: 98px; }
.drop { width: 30px; display: grid; place-items: center; }
.sep { width: 2px; margin: 2px 0; background: linear-gradient(90deg, #555, #2a2a2a); }
.debug { display: flex; flex-direction: column; align-items: center; gap: 1px; padding-top: 15px; }
.dd { display: inline-flex; align-items: center; height: 20px; padding: 0 3px 0 5px; background: linear-gradient(#e0e0e0, #a8a8a8); border: 1px solid #2c2c2c; border-radius: 1px; color: #111; text-shadow: none; }
.dd.light { width: 159px; height: 22px; background: #dcdcdc; justify-content: space-between; padding-right: 6px; }

/* graph */
.graph { flex: 1; min-height: 0; position: relative; overflow: hidden; border: 2px solid #606060; background:
  linear-gradient(90deg, #111 1px, transparent 1px) 66px 0 / 128px 128px,
  linear-gradient(#111 1px, transparent 1px) 0 72px / 128px 128px,
  linear-gradient(90deg, #343434 1px, transparent 1px) 2px 0 / 16px 16px,
  linear-gradient(#343434 1px, transparent 1px) 0 8px / 16px 16px, #262626; }
.shade { position: absolute; inset: 0; box-shadow: inset 0 0 50px rgba(0, 0, 0, .5); pointer-events: none; }
.wires { position: absolute; inset: 0; width: 100%; height: 100%; }
.wires .w { stroke: #f0f0f0; stroke-width: 2; }
.wires .p { stroke: #b678e6; stroke-width: 2; }
.wires .b { stroke: #2c8fc4; stroke-width: 2; }
.crumbs { position: absolute; inset: 0 0 auto; height: 43px; display: grid; grid-template-columns: 1fr auto 1fr; align-items: center; background: rgba(8, 8, 8, .65); font-size: 19px; line-height: 24px; color: #999; padding: 0 5px 2px 11px; }
.nav { display: flex; gap: 24px; }
.nav svg { width: 18px; height: 22px; }
.path { display: flex; align-items: center; gap: 8px; padding-left: 68px; }
.path > svg:first-child { width: 24px; height: 20px; margin-right: 6px; }
.path .chev { width: 10px; height: 16px; }
.crumbs strong { justify-self: end; color: #2f2f2f; }
.mark { position: absolute; right: 10px; bottom: 11px; font: bold 62px/72px "Roboto Condensed", "Liberation Sans Narrow", Roboto, sans-serif; color: rgba(120, 120, 120, .5); }
.node { position: absolute; border: 1px solid #0a0a0a; border-radius: 6px; background: linear-gradient(rgba(18, 22, 20, .9), rgba(8, 11, 9, .9)); box-shadow: 0 2px 5px rgba(0, 0, 0, .7); color: #e6e6e6; white-space: nowrap; }
.node header { display: flex; gap: 2px; height: 39px; padding: 2px 4px 0 9px; border-radius: 5px 5px 0 0; border-top: 1px solid rgba(255, 255, 255, .35); line-height: 17px; text-shadow: 1px 1px 1px rgba(0, 0, 0, .6); }
.node header.one { height: 23px; }
.node header div { display: flex; flex-direction: column; flex: 1; margin-left: 1px; }
.node header b { font-size: 13px; color: #f0f0f0; }
.node em { color: #a5a78c; opacity: .75; }
.red { background: linear-gradient(90deg, #8c1212, #701414 50%, #3a2020); }
.blu { background: linear-gradient(90deg, #3f6e90, #35597a 35%, #1e2d38 60%, #2c4355); }
.n4 .blu { background: linear-gradient(90deg, #4a7796, #44698a 60%, #2b333a); }
.gry { background: linear-gradient(90deg, #8a8a8a, #6e6e6e 60%, #3c3c3c); }
.yel { background: linear-gradient(90deg, #8d8c12, #77761a 50%, #2e2e28 75%); }
.dlg { width: 12px; height: 12px; flex: none; border: 3px solid #d93c3c; border-radius: 2px; background: #3a0505; align-self: center; margin-right: 1px; }
.one .dlg { align-self: flex-start; margin-top: 2px; }
.body { padding: 3px 11px 0 10px; }
.pr { display: flex; align-items: center; gap: 5px; height: 27px; }
.pr span { flex: 1; }
.ex { width: 12px; height: 14px; }
.pin { width: 15px; height: 12px; }
.arr { width: 12px; height: 12px; }
.cy { color: #0f9be8; } .cd { color: #1978b0; } .gr { color: #8fd63c; } .te { color: #22b584; } .pu { color: #bd7cf0; }
.nin { height: 18px; border: 1px solid #cfcfcf; border-radius: 1px; text-align: center; }
.w63 { width: 63px; } .w30 { width: 30px; }
.add { margin-top: 7px; padding-right: 25px; }
.add button { display: flex; align-items: center; gap: 7px; }
.two { height: 40px; align-items: center; }
.two div { display: flex; flex-direction: column; align-items: flex-start; line-height: 15px; }
.two small { font-size: 12px; color: #858585; background: #1d201e; padding-left: 7px; }
.var { position: absolute; height: 33px; border-radius: 15px; border: 1px solid #0a0a0a; background: radial-gradient(ellipse at 50% 20%, rgba(40, 110, 145, .8), rgba(30, 80, 110, .3) 40%, transparent 60%), linear-gradient(#555, #1c1f20 45%, #0c0e0e); box-shadow: inset 0 1px #999, 0 2px 5px rgba(0, 0, 0, .7); display: flex; align-items: center; justify-content: flex-end; gap: 5px; padding-right: 14px; color: #eee; }
.n1 { left: 67px; top: 233px; width: 162px; height: 75px; }
.v1 { left: 83px; top: 329px; width: 132px; }
.n2 { left: 277px; top: 233px; width: 280px; height: 130px; }
.n3 { left: 67px; top: 457px; width: 196px; height: 58px; }
.n4 { left: 323px; top: 441px; width: 248px; height: 104px; }
.n5 { left: 596px; top: 249px; width: 195px; height: 138px; }
.n6 { left: 836px; top: 249px; width: 204px; height: 114px; }
.n7 { left: 1123px; top: 233px; width: 300px; height: 143px; }
.n8 { left: 1123px; top: 393px; width: 300px; height: 143px; }
.v2 { left: 932px; top: 409px; width: 131px; }

/* compiler results */
.results { height: 171px; flex: none; display: flex; flex-direction: column; padding: 4px; border: 2px solid #606060; background: #3e3e3e; border-radius: 0 3px 3px 3px; }
.log { flex: 1; background: #222; }
.results button { align-self: flex-end; color: #8c8c8c; margin: 8px 6px 7px 0; }

/* details */
.details { flex: 1; min-height: 0; background: #606060; border-radius: 0 3px 3px 3px; padding: 3px 2px 2px; overflow: hidden; font-size: 11px; display: flex; flex-direction: column; }
.d-tools { display: flex; align-items: center; height: 24px; padding-right: 3px; font-size: 12px; gap: 4px; margin-bottom: 3px; }
.d-tools .tri { width: 9px; }
.matrix { width: 26px; height: 22px; background: #c9c9c9; display: grid; place-items: center; border: 1px solid #eee; }
.matrix svg { width: 16px; height: 14px; }
.d-list { position: relative; flex: 1; min-height: 0; overflow: hidden; display: flex; flex-direction: column; gap: 2px; }
.cat { background: #3e3e3e; border-radius: 3px; overflow: hidden; padding-bottom: 2px; flex: none; }
.cat.bare { padding: 0; background: #2f2f2f; }
.cat h2, .cat h3 { height: 22px; display: flex; align-items: center; gap: 4px; padding-left: 3px; background: #2f2f2f; font-size: 13px; color: #e2e2e2; text-shadow: 1px 1px #000; }
.cat h3 { padding-left: 14px; font-size: 11px; font-weight: normal; text-shadow: none; }
.row { height: 25px; display: flex; }
.r22 { height: 22px; } .r24 { height: 24px; } .r26 { height: 26px; } .r28 { height: 28px; } .r30 { height: 30px; }
.row > label, .row > .name { width: 137px; flex: none; display: flex; align-items: center; padding-left: 16px; border-right: 1px solid #2b2b2b; white-space: nowrap; overflow: hidden; }
.row > div { display: flex; align-items: center; padding-left: 5px; }
.row > .l0 { padding-left: 4px; gap: 5px; }
.row > .l1 { padding-left: 14px; gap: 5px; }
.row > .l2 { padding-left: 36px; }
.row > .name.l2 { padding-left: 24px; gap: 5px; }
.row > .l3 { padding-left: 46px; }
.fld { height: 17px; padding: 0 5px; background: #d8d8d8; border-radius: 3px; color: #222; }
.fld.ro { width: 124px; height: 15px; background: #7a7a7a; border-radius: 0; color: #151515; }
.fld.sock { width: 84px; height: 20px; background: #6a6a6a; }
.w109 { width: 109px; } .w125 { width: 125px; }
.mag { margin-left: 0; } .clr { margin-left: 9px; }
.row .dd { justify-content: space-between; gap: 1px; }
.row .w108 { width: 109px; padding-right: 7px; }
.row .key { padding-left: 1px; padding-right: 3px; }
.key + .tri { margin-left: 8px; }
.row .combo { width: 125px; padding-right: 0; background: #f4f4f4; padding-left: 6px; }
.combo b { width: 24px; height: 100%; display: grid; place-items: center; background: #b8b8b8; }
input[type="checkbox"] { width: 14px; height: 14px; margin-left: 1px; background: #afafaf; border-radius: 2px; }
input[type="checkbox"]:checked { background: #d8d8d8; display: grid; place-items: center; }
input[type="checkbox"]:checked::before { content: ""; width: 10px; height: 10px; background: #555; clip-path: polygon(0 50%, 18% 38%, 38% 60%, 82% 5%, 100% 20%, 42% 95%); }
.rs { width: 8px; height: 8px; margin-left: 6px; }
.tri + .rs { margin-left: 8px; }
.cnt { width: 116px; }
.mem { width: 104px; }
.pl { color: #e8e8e8; }
.bin { width: 11px; height: 13px; margin-left: 13px; }
.bin + .rs { margin-left: 8px; }
.spin { position: relative; }
.spin svg { position: absolute; right: 5px; top: 4px; width: 10px; height: 10px; }
.scroll { position: absolute; right: 3px; top: 1px; bottom: 0; width: 10px; background: linear-gradient(#c8c8c8, #c8c8c8) 0 0 / 10px 870px no-repeat, linear-gradient(90deg, transparent 5px, #666 5px, #666 6px, transparent 6px); }

/* tooltip */
.tip { position: absolute; left: 191px; top: 174px; width: 361px; height: 178px; padding: 9px 11px; border: 2px solid #000; background: #efefef; color: #444; white-space: nowrap; font-size: 13px; line-height: 18px; }
.tip h4 { font: 16px/24px Roboto, sans-serif; color: #111; margin-bottom: 6px; }
.tip b { color: #000; margin-left: 2px; }
.tip .it { font-style: italic; color: #666; margin-bottom: 14px; }
.tip .it + .it { margin-bottom: 3px; }
.tip .hold { font-size: 11px; text-align: center; color: #666; margin-top: 2px; }

/* annotations */
.ring { position: absolute; overflow: visible; fill: none; }
.ring rect { x: 3px; y: 3px; rx: 14px; width: calc(100% - 6px); height: calc(100% - 6px); }
.ring .base { stroke-width: 5; stroke: currentColor; opacity: .7; }
.ring .grain { stroke-width: 3; stroke: currentColor; stroke-dasharray: 4 2 6 1 3 2; }
.ring-red { left: 566px; top: 363px; width: 294px; height: 143px; color: #c42433; }
.ring-orange { left: 351px; top: 584px; width: 216px; height: 77px; color: #e07a2c; }
.ring-yellow { left: 1503px; top: 292px; width: 365px; height: 436px; color: #d8d120; }
.note { position: absolute; font: italic 600 51px/64px "Open Sans", "Noto Sans", sans-serif; font-variant-ligatures: none; white-space: nowrap; }
.note-red { left: 572px; top: 285px; color: #e3242b; }
.note-orange { left: 354px; top: 683px; color: #f58232; }
.note-yellow { left: 1468px; top: 213px; color: #fff22d; }
```
